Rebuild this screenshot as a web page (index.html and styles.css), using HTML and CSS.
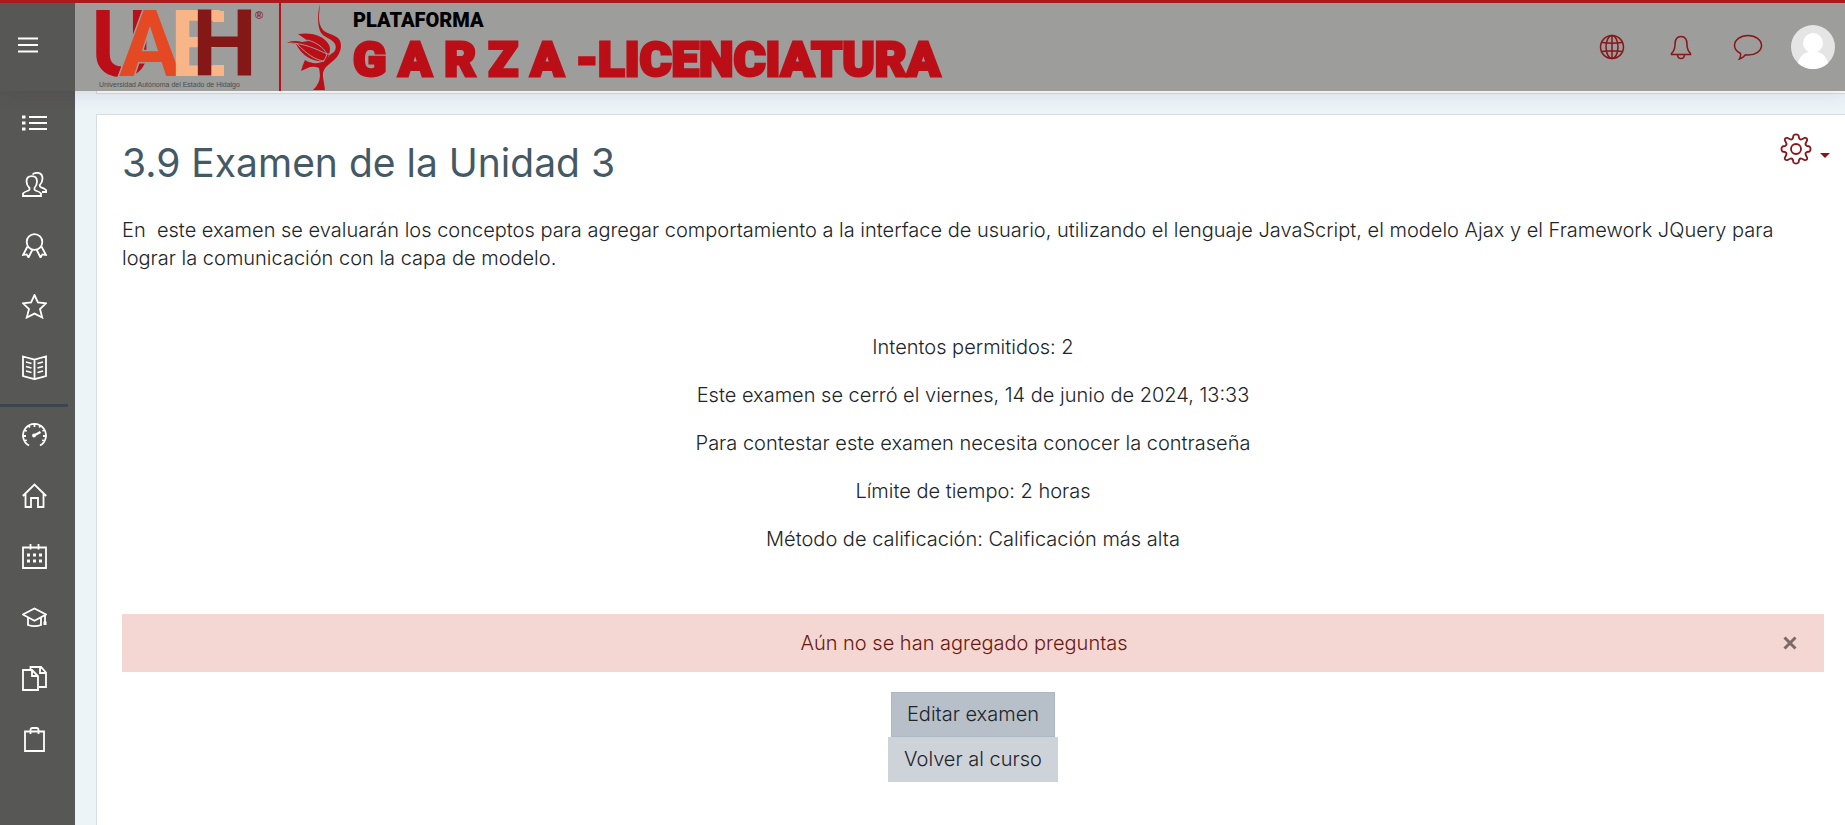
FILE: index.html
```html
<!DOCTYPE html>
<html lang="es">
<head>
<meta charset="utf-8">
<meta name="viewport" content="width=device-width, initial-scale=1">
<title>3.9 Examen de la Unidad 3</title>
<link rel="stylesheet" href="styles.css">
</head>
<body>
<header class="topbar">
  <div class="menu-zone">
    <button class="icon-btn" type="button" aria-label="Menú">
      <svg width="20" height="16" viewBox="0 0 20 16"><path d="M0 1.500h20M0 8h20M0 14.500h20" stroke-width="1.800"/></svg>
    </button>
  </div>
  <a class="brand" href="#" aria-label="UAEH Plataforma Garza Licenciatura">
    <svg class="seal" width="176" height="88" viewBox="0 0 176 88">
      <g class="seal-letters">
        <text x="-4" y="73" fill="#bb0e17">U</text>
        <text x="24" y="73" fill="#e54923" class="seal-cut">A</text>
        <text x="75" y="73" fill="#f7b588">E</text>
        <path d="M118 8h11v11h-11zM118 62h11v11h-11z" fill="#f7b588"/>
        <text x="97" y="73" fill="#831817">H</text>
      </g>
      <text class="seal-mark" x="160" y="16">®</text>
      <text class="seal-caption" x="4" y="84">Universidad Autónoma del Estado de Hidalgo</text>
    </svg>
    <span class="brand-rule"></span>
    <svg class="heron" width="56" height="88" viewBox="0 0 56 88">
      <path d="M11 31C26 29 37 33 42 42Q44 46 42 51Q41 57 37 58C28 59 16 55 9 41L0 39.500Q8 37 15 39L21 38Z"/>
      <path d="M33 1C32 12 31 18 34 24C37 31 45 30 51 35C57 41 53 52 47 57C40 63 35 66 36 74Q37 80 38 87H26C33 80 34 74 32 65Q28 63 23 64L14 68Q16 61 18 57C24 61 32 61 37 58Q41 56 43 51C48 50 50 45 48 41C45 35 36 35 33 28C30 20 31 8 33 1Z"/>
      <path class="feather" d="M2 40C17 40 29 46 40 51M10 41C20 51 28 57 37 58M20 37C29 39 36 44 40 51M40 51Q39 55 36 59M40 51L44 51"/>
    </svg>
    <span class="wordmark">
      <span class="word-small">PLATAFORMA</span>
      <span class="word-big">G A R Z A -LICENCIATURA</span>
    </span>
  </a>
  <div class="tools">
    <button class="icon-btn" type="button" aria-label="Idioma">
      <svg width="26" height="26" viewBox="0 0 26 26"><circle cx="13" cy="13" r="11.500"/><ellipse cx="13" cy="13" rx="6" ry="11.500"/><path d="M13 1.500v23M3 8.500q10 1.500 20 0M3 17.500q10-1.500 20 0"/></svg>
    </button>
    <button class="icon-btn" type="button" aria-label="Notificaciones">
      <svg width="24" height="28" viewBox="0 0 24 28"><path d="M2.500 21.500v-1q3.500-3.500 3.500-9C6 6 8 3.500 12 3.500s6 2.500 6 8q0 5.500 3.500 9v1zM8.500 22q.3 3.500 3.500 3.500t3.500-3.500"/></svg>
    </button>
    <button class="icon-btn" type="button" aria-label="Mensajes">
      <svg width="30" height="28" viewBox="0 0 30 28"><path d="M7.500 20.500C3.500 18.500 1.500 15.500 1.500 12.500 1.500 7 7.500 2.500 15 2.500S28.500 7 28.500 12.500 22.500 22 15 22q-1.500 0-2.500-.2Q10 25 6.500 26q1.700-2.500 1-5.500z"/></svg>
    </button>
    <button class="icon-btn" type="button" aria-label="Perfil de usuario">
      <svg class="avatar" width="44" height="44" viewBox="0 0 44 44"><circle cx="22" cy="22" r="22" fill="#e5e5e5"/><circle cx="22" cy="18" r="10" fill="#fff"/><path d="M7 38.200C9 30 14 26.500 22 26.500S35 30 37 38.200A22 22 0 0 1 7 38.200Z" fill="#fff"/></svg>
    </button>
  </div>
</header>
<div class="shell">
  <nav class="sidebar" aria-label="Navegación">
    <ul class="side-list">
      <li><a href="#" aria-label="Contenido"><svg viewBox="0 0 25 25"><path d="M7 6h18M7 12h18M7 18h18"/><path d="M0 6h3.500M0 12h3.500M0 18h3.500" stroke-width="3"/></svg></a></li>
      <li><a href="#" aria-label="Participantes"><svg viewBox="0 0 25 25"><path d="M1 24v-2.500q1-1.500 5.500-3 1.500-.8 1-2.500Q4.500 13 4.500 9.500C4.500 6 6.500 4.200 9.800 4.200S15 6 15 9.500q0 3.500-2.500 6.500-.5 1.700 1 2.500 4.500 1.500 5.500 3V24z"/><path d="M10.500 2.500Q12 .8 15 .8c4 0 5.500 2.400 5.500 5.700q0 3.500-2.700 6.500-.3 1.500 1.200 2.300 4.500 1.500 5.200 3V20H20"/></svg></a></li>
      <li><a href="#" aria-label="Insignias"><svg viewBox="0 0 25 25"><circle cx="12.500" cy="9" r="7.800"/><path d="M5.500 13.500L1 22l3.700-.6L6.500 24.500l4-8M19.500 13.500L24 22l-3.700-.6-1.800 3.100-4-8"/></svg></a></li>
      <li><a href="#" aria-label="Competencias"><svg viewBox="0 0 25 25"><path d="M12.500 1l3.400 7.400 8.100.9-6 5.700 2.200 8.500-7.700-3.900-7.700 3.900L7 15 1 9.300l8.100-.9z"/></svg></a></li>
      <li><a href="#" aria-label="Calificaciones"><svg viewBox="0 0 25 25"><path d="M1 1.500l11.500 3 11.500-3V21l-11.500 3.200L1 21zM12.500 4.500v19.700M4 7l5.500 1.500M4 11.500L9.500 13M4 16l5.500 1.500M21 7l-5.500 1.500M21 11.500L15.500 13M21 16l-5.500 1.500"/></svg></a></li>
    </ul>
    <hr class="side-rule">
    <ul class="side-list">
      <li><a href="#" aria-label="Tablero"><svg viewBox="0 0 25 25"><path d="M7 23.500A11.500 11.500 0 1 1 18 23.500M12.500 2v3M6.500 3.500l1.300 2M18.500 3.500l-1.300 2M2.500 8l2.200 1.200M1.500 14h2.500M2.500 19l2.200-1M22.500 8l-2 1M23.500 14H21M22.500 19l-2.200-1"/><path d="M12 13.500L18.500 10" stroke-width="2.500"/><circle cx="12" cy="13.500" r="1"/></svg></a></li>
      <li><a href="#" aria-label="Inicio"><svg viewBox="0 0 25 25"><path d="M.8 13L12.500 1.500 24.200 13M3.500 11v13H9v-9h7v9h5.500V11"/></svg></a></li>
      <li><a href="#" aria-label="Calendario"><svg viewBox="0 0 25 25"><path d="M1 3.500h23V24H1zM8.500 0v5.500M16.500 0v5.500"/><path d="M5 11h3M11 11h3M17 11h3M5 17h3M11 17h3M17 17h3" stroke-width="3"/></svg></a></li>
      <li><a href="#" aria-label="Mis cursos"><svg viewBox="0 0 25 25"><path d="M.8 9.500L12.500 3.500l11.500 6-11.500 6.200zM6 12.500V20q6.500 2.300 13 0v-7.500M23 10v7"/><path d="M23 16.500v3.500" stroke-width="3"/></svg></a></li>
      <li><a href="#" aria-label="Archivos privados"><svg viewBox="0 0 25 25"><path d="M1 4h9l6 6v14H1zM10 4v6h6M8.500 3.500V1H19l5 5.500V21h-7M18 1v6h6"/></svg></a></li>
      <li><a href="#" aria-label="Banco de contenido"><svg viewBox="0 0 25 25"><path d="M3 4.500h19V24H3zM8.500 7V3Q8.500 1 10.500 1h4q2 0 2 2v4"/></svg></a></li>
    </ul>
  </nav>
  <main class="page">
    <div class="crumb-strip"></div>
    <section class="card">
      <div class="title-row">
        <h1>3.9 Examen de la Unidad 3</h1>
        <button class="gear-btn" type="button" aria-label="Acciones">
          <svg width="32" height="32" viewBox="-16 -16 32 32"><circle r="5"/><path d="M-2.500 -13.600Q0 -15.500 2.500 -13.600L3.200 -10.500Q4.300 -8.900 6 -9.800L8.800 -11.200Q11.400 -11.400 11.200 -8.800L9.800 -6Q8.900 -4.300 10.500 -3.200L13.600 -2.500Q15.500 0 13.600 2.500L10.500 3.200Q8.900 4.300 9.800 6L11.200 8.800Q11.400 11.400 8.800 11.200L6 9.800Q4.300 8.900 3.200 10.500L2.500 13.600Q0 15.500 -2.500 13.600L-3.200 10.500Q-4.300 8.900 -6 9.800L-8.800 11.200Q-11.400 11.400 -11.200 8.800L-9.800 6Q-8.900 4.300 -10.500 3.200L-13.600 2.500Q-15.500 0 -13.600 -2.500L-10.500 -3.200Q-8.900 -4.300 -9.800 -6L-11.200 -8.800Q-11.400 -11.400 -8.800 -11.200L-6 -9.800Q-4.300 -8.900 -3.200 -10.500Z"/></svg>
          <span class="caret"></span>
        </button>
      </div>
      <p class="intro">En&nbsp; este examen se evaluarán los conceptos para agregar comportamiento a la interface de usuario, utilizando el lenguaje JavaScript, el modelo Ajax y el Framework JQuery para lograr la comunicación con la capa de modelo.</p>
      <div class="quiz-info">
        <p>Intentos permitidos: 2</p>
        <p>Este examen se cerró el viernes, 14 de junio de 2024, 13:33</p>
        <p>Para contestar este examen necesita conocer la contraseña</p>
        <p>Límite de tiempo: 2 horas</p>
        <p>Método de calificación: Calificación más alta</p>
      </div>
      <div class="alert" role="alert">
        <span>Aún no se han agregado preguntas</span>
        <button class="close" type="button" aria-label="Cerrar"><svg width="14" height="14" viewBox="0 0 14 14"><path d="M1.500 1.500l11 11M12.500 1.500l-11 11"/></svg></button>
      </div>
      <div class="actions">
        <button class="btn btn-edit" type="button">Editar examen</button>
        <button class="btn btn-back" type="button">Volver al curso</button>
      </div>
    </section>
  </main>
</div>
</body>
</html>
```
FILE: styles.css
```css
* { box-sizing: border-box; }
body {
  margin: 0;
  min-height: 100vh;
  display: flex;
  flex-direction: column;
  background: #ecf4f8;
  color: #212529;
  font: 300 20px/28px Inter, "Noto Sans", sans-serif;
}
button { font: inherit; color: inherit; cursor: pointer; }
svg { display: block; fill: none; }
p, h1, ul { margin: 0; padding: 0; }

.topbar {
  position: relative;
  z-index: 1;
  display: flex;
  height: 91px;
  border-top: 3px solid #a91c1e;
  background: #9d9d9b;
  box-shadow: 0 2px 18px rgba(60, 50, 70, .14);
}
.menu-zone {
  width: 75px;
  padding: 34px 18px;
  background: #575755;
}
.icon-btn { display: block; padding: 0; border: 0; background: none; }
.menu-zone svg { stroke: #fff; }

.brand { display: flex; margin-left: 20px; text-decoration: none; }
.seal { overflow: visible; }
.seal-letters text { font: 700 92px Roboto, "Liberation Sans", sans-serif; }
.seal-letters .seal-cut { stroke: #9d9d9b; stroke-width: 3px; paint-order: stroke; }
.seal-mark { font: 700 11px "Liberation Sans", sans-serif; fill: #8c2226; }
.seal-caption { font: 7px "Liberation Sans", sans-serif; fill: #4c4c4b; }
.brand-rule { width: 2px; margin-left: 8px; background: #bb0e17; }
.heron { margin-left: 6px; fill: #bb0e17; }
.feather { fill: none; stroke: #9d9d9b; stroke-width: 1px; }
.wordmark {
  display: flex;
  flex-direction: column;
  margin-left: 10px;
  padding-top: 6px;
  font-family: Roboto, "Liberation Sans", sans-serif;
  font-weight: 900;
  white-space: nowrap;
}
.word-small { font-size: 20px; line-height: 22px; color: #000; }
.word-big { font-size: 49px; line-height: 58px; color: #bb0e17; -webkit-text-stroke: 3px #bb0e17; }

.tools {
  display: flex;
  align-items: center;
  gap: 44px;
  margin-left: auto;
  padding-right: 10px;
}
.tools svg { stroke: #8a1518; stroke-width: 1.5px; }
.tools .avatar { stroke: none; }
.tools .icon-btn:nth-child(3) { margin-left: -4px; }
.tools .icon-btn:last-child { margin-left: -16px; }

.shell { display: flex; flex: 1; }
.sidebar { width: 75px; flex: none; padding-top: 8px; background: #575755; }
.side-list { display: flex; flex-direction: column; gap: 12px; list-style: none; }
.side-list a { display: flex; align-items: center; height: 49px; padding-left: 22px; }
.side-list svg { width: 25px; height: 25px; stroke: #fff; stroke-width: 1.8px; }
.side-rule { width: 68px; height: 3px; margin: 12px 0 3px; border: 0; background: #3a4750; }

.page { display: flex; flex: 1; flex-direction: column; min-width: 0; padding-left: 21px; }
.crumb-strip { height: 3px; border: solid #d5dde1; border-width: 0 0 1px 1px; background: #fff; }
.card {
  flex: 1;
  margin-top: 20px;
  padding: 24px 21px 24px 25px;
  border: solid #d5dde1;
  border-width: 1px 0 0 1px;
  background: #fff;
}
.title-row { display: flex; justify-content: space-between; }
h1 { font-size: 39px; font-weight: 400; line-height: 48px; color: #445964; }
.gear-btn { display: flex; gap: 8px; align-self: flex-start; margin: -6px -6px 0 0; padding: 0; border: 0; background: none; }
.gear-btn svg { stroke: #8a1518; stroke-width: 1.8px; stroke-linejoin: round; }
.caret { margin-top: 20px; border: 5px solid transparent; border-top-color: #8a1518; border-bottom: 0; align-self: flex-start; }
.intro { margin-top: 29px; }
.quiz-info { display: flex; flex-direction: column; gap: 20px; margin: 61px 0; text-align: center; }
.alert {
  position: relative;
  padding: 15px 58px 15px 40px;
  background: #f4d6d2;
  color: #691911;
  text-align: center;
}
.close { position: absolute; top: 22px; right: 27px; padding: 0; border: 0; background: none; }
.close svg { stroke: #7a6b69; stroke-width: 3px; }
.actions { display: flex; flex-direction: column; align-items: center; margin-top: 20px; }
.btn { padding: 8px 15px; border: 1px solid; line-height: 27px; }
.btn-edit { background: #b7c0c9; border-color: #adb8c2; }
.btn-back { background: #ced3da; border-color: #ced3da; }
```
